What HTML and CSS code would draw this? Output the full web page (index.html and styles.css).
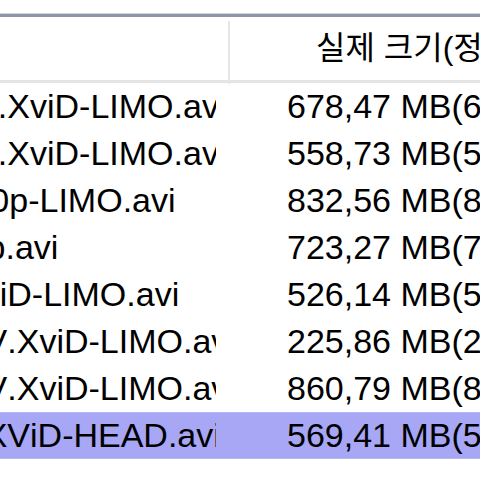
FILE: index.html
```html
<!DOCTYPE html>
<html lang="ko">
<head>
    <meta charset="UTF-8">
    <title>파일 목록</title>
    <link rel="stylesheet" href="styles.css">
</head>
<body>
    <div class="view">
        <div class="list">
            <div class="head">
                <div class="cell name">이름</div>
                <div class="cell size">실제 크기(정확한 크기)</div>
            </div>
            <div class="row">
                <div class="cell name"><span>American.Dad.S03E08.HDTV.XviD-LIMO.avi</span></div>
                <div class="cell size">678,47 MB(678,470,144 바이트)</div>
            </div>
            <div class="row">
                <div class="cell name"><span>American.Dad.S03E09.HDTV.XviD-LIMO.avi</span></div>
                <div class="cell size">558,73 MB(558,731,264 바이트)</div>
            </div>
            <div class="row">
                <div class="cell name"><span>Las.Vegas.S05E06.HDTV.720p-LIMO.avi</span></div>
                <div class="cell size">832,56 MB(832,561,152 바이트)</div>
            </div>
            <div class="row">
                <div class="cell name"><span>Without.a.Trace.S06E07.720p.avi</span></div>
                <div class="cell size">723,27 MB(723,271,680 바이트)</div>
            </div>
            <div class="row">
                <div class="cell name"><span>Torchwood.S02E05.HDTV.XviD-LIMO.avi</span></div>
                <div class="cell size">526,14 MB(526,141,824 바이트)</div>
            </div>
            <div class="row">
                <div class="cell name"><span>Criminal.Minds.S03E05.HDTV.XviD-LIMO.avi</span></div>
                <div class="cell size">225,86 MB(225,861,632 바이트)</div>
            </div>
            <div class="row">
                <div class="cell name"><span>Criminal.Minds.S03E06.HDTV.XviD-LIMO.avi</span></div>
                <div class="cell size">860,79 MB(860,790,784 바이트)</div>
            </div>
            <div class="row selected">
                <div class="cell name"><span>The.Shield.S07E02.DVDRip.XViD-HEAD.avi</span></div>
                <div class="cell size">569,41 MB(569,411,584 바이트)</div>
            </div>
        </div>
    </div>
</body>
</html>
```

FILE: styles.css
```css
body {
    margin: 0;
    background-color: #fff;
    color: #000;
    font-family: "Liberation Sans", "Noto Sans CJK KR", sans-serif;
    font-size: 34px;
    font-kerning: none;
}
.view {
    width: 480px;
    height: 480px;
    overflow: hidden;
    padding-top: 14px;
    box-sizing: border-box;
}
/* list is scrolled sideways, so the name column starts off screen */
.list {
    width: 1400px;
    margin-left: -456px;
    border-top: 3px solid #9094a8;
    box-shadow: 0 -1px 0 #d3d5de;
}
.head,
.row {
    display: grid;
    grid-template-columns: 686px 1fr;
    white-space: nowrap;
}
.head {
    height: 63px;
    border-bottom: 3px solid #e4e4e4;
    font-size: 32px;
}
.head .cell {
    line-height: 63px;
}
.head .name {
    box-sizing: border-box;
    margin-top: 4px;
    border-right: 2px solid #e6e6e6;
    padding-left: 6px;
    color: transparent;
}
.head .size {
    padding-left: 86px;
}
.row {
    height: 47px;
    line-height: 47px;
}
.row .name {
    padding: 0 14px 0 6px;
}
.row .name span {
    display: block;
    overflow: hidden;
}
.row .size {
    padding-left: 57px;
}
.row.selected {
    background-color: #a7a7f6;
    box-shadow: inset 0 1px 0 #b8b8f7, inset 0 -1px 0 #b8b8f7;
}
```
